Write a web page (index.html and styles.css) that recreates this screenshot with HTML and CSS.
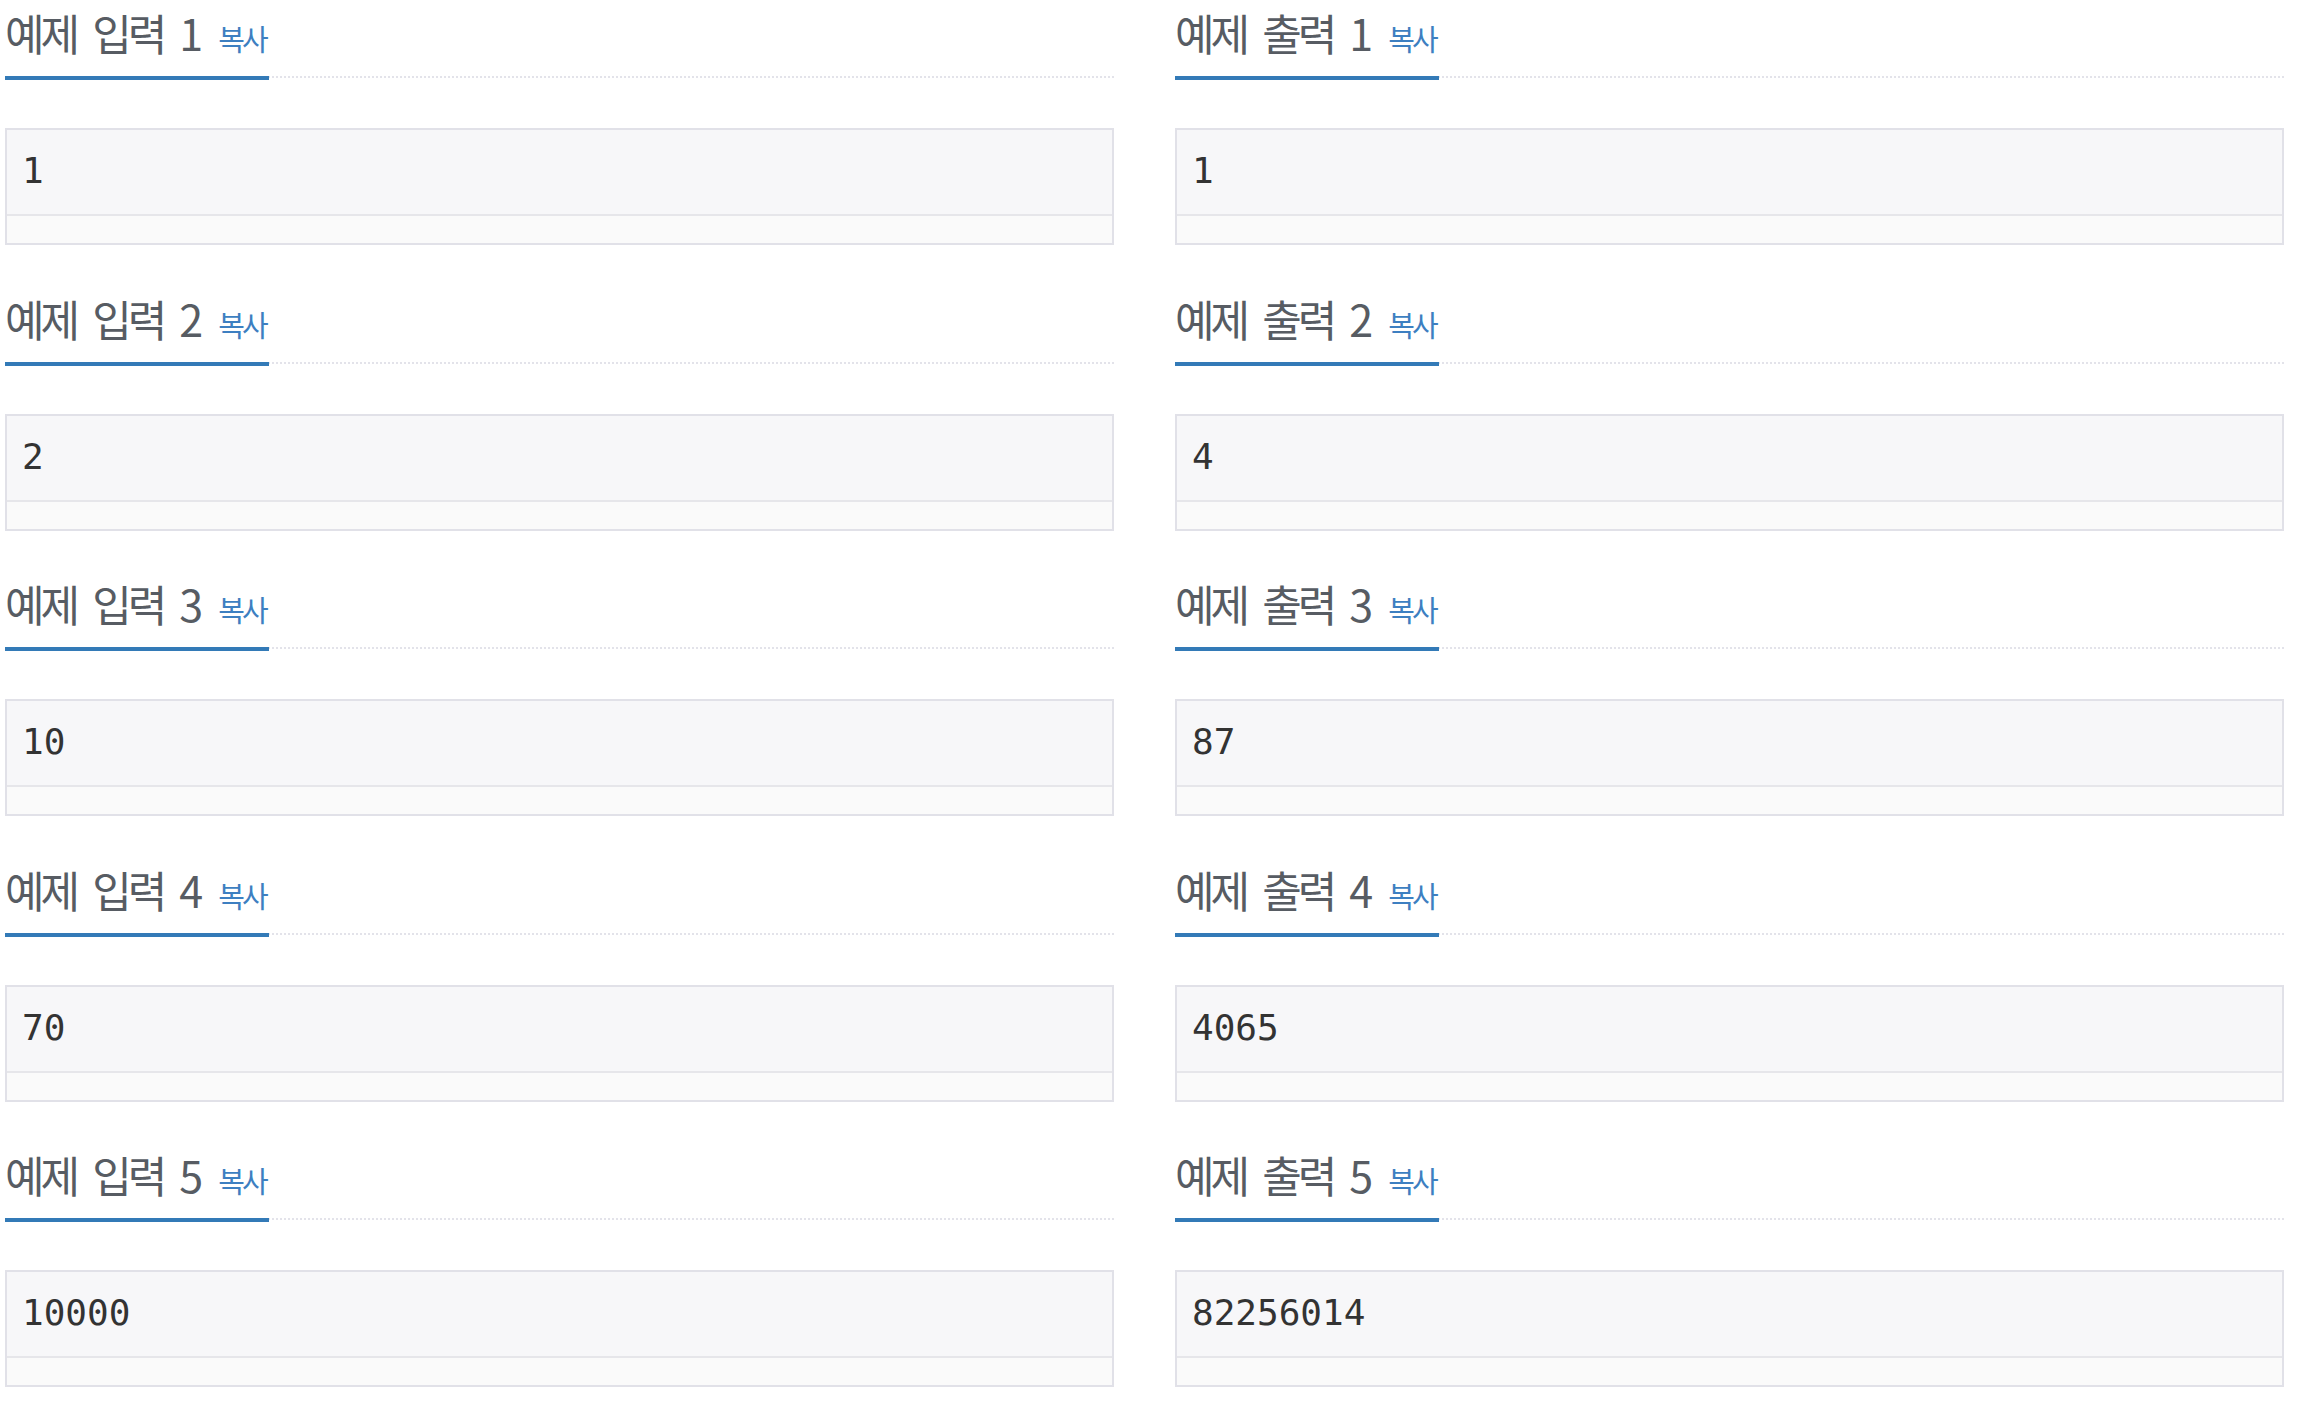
FILE: index.html
```html
<!DOCTYPE html>
<html lang="ko">
<head>
  <meta charset="UTF-8" />
  <meta name="viewport" content="width=device-width, initial-scale=1" />
  <title>예제 입력 / 출력</title>
  <link rel="stylesheet" href="styles.css">
</head>
<body>

  <div class="samples">
    <section class="sample">
      <div class="headline"><h2>예제 입력 1 <a href="#" class="copy">복사</a></h2></div>
      <div class="sample-box"><pre>1</pre><div class="track"></div></div>
    </section>
    <section class="sample">
      <div class="headline"><h2>예제 출력 1 <a href="#" class="copy">복사</a></h2></div>
      <div class="sample-box"><pre>1</pre><div class="track"></div></div>
    </section>

    <section class="sample">
      <div class="headline"><h2>예제 입력 2 <a href="#" class="copy">복사</a></h2></div>
      <div class="sample-box"><pre>2</pre><div class="track"></div></div>
    </section>
    <section class="sample">
      <div class="headline"><h2>예제 출력 2 <a href="#" class="copy">복사</a></h2></div>
      <div class="sample-box"><pre>4</pre><div class="track"></div></div>
    </section>

    <section class="sample">
      <div class="headline"><h2>예제 입력 3 <a href="#" class="copy">복사</a></h2></div>
      <div class="sample-box"><pre>10</pre><div class="track"></div></div>
    </section>
    <section class="sample">
      <div class="headline"><h2>예제 출력 3 <a href="#" class="copy">복사</a></h2></div>
      <div class="sample-box"><pre>87</pre><div class="track"></div></div>
    </section>

    <section class="sample">
      <div class="headline"><h2>예제 입력 4 <a href="#" class="copy">복사</a></h2></div>
      <div class="sample-box"><pre>70</pre><div class="track"></div></div>
    </section>
    <section class="sample">
      <div class="headline"><h2>예제 출력 4 <a href="#" class="copy">복사</a></h2></div>
      <div class="sample-box"><pre>4065</pre><div class="track"></div></div>
    </section>

    <section class="sample">
      <div class="headline"><h2>예제 입력 5 <a href="#" class="copy">복사</a></h2></div>
      <div class="sample-box"><pre>10000</pre><div class="track"></div></div>
    </section>
    <section class="sample">
      <div class="headline"><h2>예제 출력 5 <a href="#" class="copy">복사</a></h2></div>
      <div class="sample-box"><pre>82256014</pre><div class="track"></div></div>
    </section>
  </div>

</body>
</html>
```

FILE: styles.css
```css
body {
  margin: 0;
  padding: 2px 0 0 5px;
  font-family: "Noto Sans CJK KR", "Noto Sans", sans-serif;
  background-color: #ffffff;
}

.samples {
  display: grid;
  grid-template-columns: 1109px 1109px;
  column-gap: 61px;
}

.sample {
  margin-bottom: 42.5px;
}

.headline {
  display: flex;
  border-bottom: 2px dotted #e3e3ea;
}

.headline h2 {
  margin: 0 0 -4px 0;
  padding: 0 3px 14px 0;
  border-bottom: 4px solid #337ab7;
  font-size: 43px;
  line-height: 60px;
  font-weight: normal;
  letter-spacing: -4px;
  word-spacing: 8px;
  color: #575c63;
  white-space: nowrap;
}

.copy {
  margin-left: 3px;
  font-size: 29px;
  line-height: 1;
  letter-spacing: -3px;
  word-spacing: 0;
  color: #3d7fc1;
  text-decoration: none;
}

.sample-box {
  margin-top: 50px;
  border: 2px solid #e1e1e8;
  background-color: #f7f7f9;
}

.sample-box pre {
  margin: 0;
  height: 84px;
  padding: 15px 15px 0 15px;
  box-sizing: border-box;
  font-family: "DejaVu Sans Mono", "Liberation Mono", monospace;
  font-size: 36px;
  line-height: 51px;
  color: #333333;
}

.track {
  height: 27px;
  border-top: 2px solid #e6e6ea;
  background-color: #fafafa;
}
```
